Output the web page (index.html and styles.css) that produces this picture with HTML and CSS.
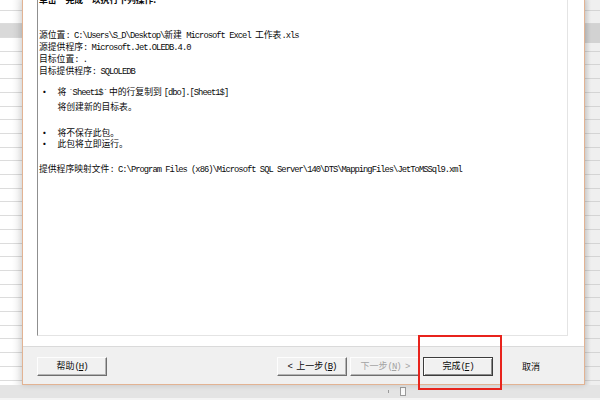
FILE: index.html
```html
<!DOCTYPE html>
<html lang="zh-CN">
<head>
  <meta charset="UTF-8" />
  <meta name="viewport" content="width=device-width, initial-scale=1.0" />
  <title>SQL Server 导入和导出向导</title>
  <link rel="stylesheet" href="styles.css">
</head>
<body>
  <div class="screen">
    <div class="sheet sheet-left"></div>

    <div class="dialog">
      <div class="dialog-body">
        <div class="summary">
          <div class="lines">
            <div class="line title">单击“完成”以执行下列操作:</div>
            <div class="line gap-head">源位置<span class="en">: C:\Users\S_D\Desktop\</span>新建<span class="en"> Microsoft Excel </span>工作表<span class="en">.xls</span></div>
            <div class="line">源提供程序<span class="en">: Microsoft.Jet.OLEDB.4.0</span></div>
            <div class="line">目标位置<span class="en">: .</span></div>
            <div class="line">目标提供程序<span class="en">: SQLOLEDB</span></div>

            <div class="line item gap-list"><span class="dot">•</span><span>将 <span class="en">`Sheet1$`</span> 中的行复制到 <span class="en">[dbo].[Sheet1$]</span></span></div>
            <div class="line sub">将创建新的目标表。</div>

            <div class="line item gap-block"><span class="dot">•</span><span>将不保存此包。</span></div>
            <div class="line item"><span class="dot">•</span><span>此包将立即运行。</span></div>

            <div class="line gap-map">提供程序映射文件<span class="en">: C:\Program Files (x86)\Microsoft SQL Server\140\DTS\MappingFiles\JetToMSSql9.xml</span></div>
          </div>
        </div>
      </div>

      <div class="dialog-foot">
        <button class="btn">帮助<span class="en">(<u>H</u>)</span></button>
        <div class="nav">
          <button class="btn"><span class="en">&lt; </span>上一步<span class="en">(<u>B</u>)</span></button>
          <button class="btn" disabled>下一步<span class="en">(<u>N</u>) &gt;</span></button>
          <button class="btn btn-default">完成<span class="en">(<u>F</u>)</span></button>
          <button class="btn btn-flat">取消</button>
        </div>
      </div>

      <div class="focus-mark"></div>
    </div>

    <div class="sheet sheet-right"></div>
  </div>

  <div class="statusbar">
    <span class="tick"></span>
    <span class="box"></span>
  </div>
</body>
</html>
```

FILE: styles.css
```css
body {
  margin: 0;
  width: 600px;
  height: 400px;
  overflow: hidden;
  background: #fff;
  font-family: "Noto Sans CJK SC", sans-serif;
  color: #0a0a0a;
}
.screen {
  display: flex;
  height: 385px;
}
.sheet {
  flex: none;
}
.sheet-left {
  width: 22px;
  background:
    linear-gradient(to right, rgba(0, 0, 0, 0) 55%, rgba(0, 0, 0, 0.07)),
    linear-gradient(#d9d9d9, #d9d9d9) 0 24px / 100% 13px no-repeat,
    repeating-linear-gradient(#fff 0 12.7px, #dcdcdc 12.7px 13.7px) 0 -3px;
}
.sheet-right {
  width: 15px;
  background:
    linear-gradient(to right, rgba(0, 0, 0, 0.08), rgba(0, 0, 0, 0) 40%),
    linear-gradient(#d2d2d2, #d2d2d2) 0 24px / 100% 19px no-repeat,
    repeating-linear-gradient(#efefef 0 12.7px, #d4d4d4 12.7px 13.7px) 0 -3px;
}
.dialog {
  position: relative;
  z-index: 1;
  width: 563px;
  flex: none;
  box-sizing: border-box;
  display: flex;
  flex-direction: column;
  background: #fff;
  border: 1px solid #e2b393;
  border-top: none;
  box-shadow: 0 0 6px rgba(0, 0, 0, 0.15);
}
.dialog-body {
  height: 347px;
  box-sizing: border-box;
  padding: 0 16px 10px 14px;
  border-bottom: 1px solid #dadada;
}
.summary {
  height: 100%;
  box-sizing: border-box;
  overflow: hidden;
  border-left: 1px solid #8f8f8f;
  border-right: 1px solid #e4e4e4;
  border-bottom: 1px solid #e4e4e4;
  padding-left: 1px;
  font-size: 8.8px;
  line-height: 11.8px;
}
.lines {
  margin-top: -6px;
}
.line {
  height: 11.8px;
  white-space: nowrap;
}
.en {
  font-family: "Liberation Mono", monospace;
  letter-spacing: -0.98px;
}
.title {
  font-weight: bold;
}
.gap-head {
  margin-top: 23.6px;
}
.gap-list {
  margin-top: 9px;
}
.gap-block {
  margin-top: 13.6px;
}
.gap-map {
  margin-top: 12.5px;
}
.item {
  display: flex;
}
.dot {
  width: 18.5px;
  flex: none;
  padding-left: 1px;
  box-sizing: border-box;
  font-weight: bold;
}
.sub {
  padding-left: 18.5px;
  margin-top: 3.8px;
}
.dialog-foot {
  flex: 1;
  background: #f0f0f0;
  display: flex;
  align-items: center;
  justify-content: space-between;
  padding: 1px 18px 0 14px;
}
.nav {
  display: flex;
  gap: 3px;
}
.btn {
  width: 70px;
  height: 19px;
  box-sizing: border-box;
  padding: 0;
  font-family: "Noto Sans CJK SC", sans-serif;
  font-size: 9px;
  line-height: 15px;
  color: #0a0a0a;
  background: #f1f1f1;
  border: 1px solid;
  border-color: #fdfdfd #6e6e6e #6e6e6e #fdfdfd;
  box-shadow: inset -1px -1px #b4b4b4;
}
.btn .en {
  letter-spacing: -1px;
}
.btn:disabled {
  color: #a3a3a3;
}
.btn-default {
  border-color: #3c3c3c;
  box-shadow: inset 1px 1px #fdfdfd, inset -1px -1px #8a8a8a;
}
.btn-flat {
  background: transparent;
  border-color: transparent;
  box-shadow: none;
}
.focus-mark {
  position: absolute;
  left: 395px;
  top: 335px;
  width: 84px;
  height: 55px;
  box-sizing: border-box;
  border: 2px solid #e8231c;
}
.statusbar {
  height: 15px;
  box-sizing: border-box;
  background: #e4e4e4;
  border-bottom: 2px solid #f4f4f4;
  display: flex;
  align-items: center;
  padding-left: 388px;
  gap: 11px;
}
.tick {
  width: 1px;
  height: 3px;
  background: #9a9a9a;
}
.box {
  width: 6px;
  height: 9px;
  box-sizing: border-box;
  border: 1px solid #9a9a9a;
  background: #fafafa;
}
```
